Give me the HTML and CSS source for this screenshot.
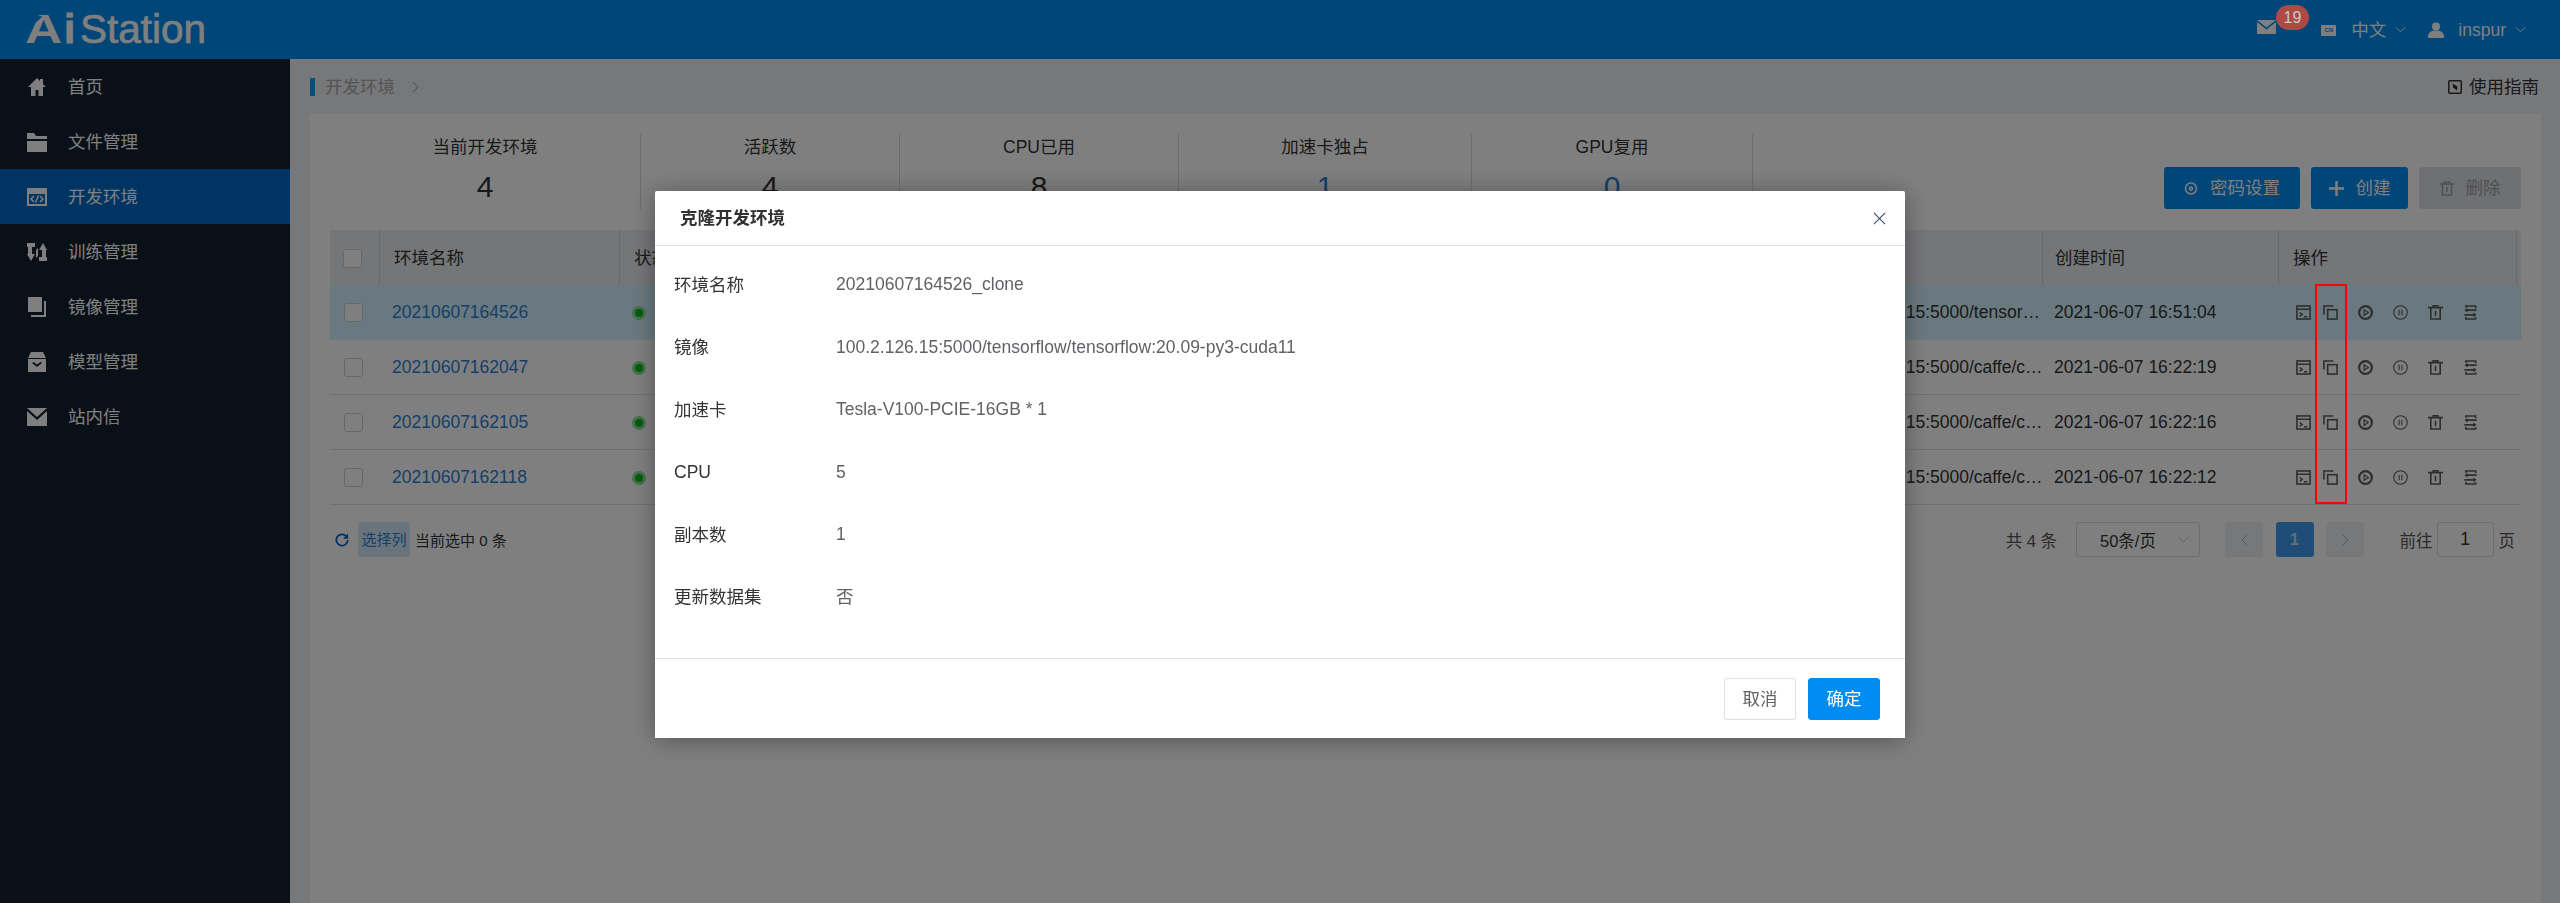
FILE: index.html
```html
<!DOCTYPE html>
<html lang="zh-CN">
<head>
<meta charset="utf-8">
<title>AiStation</title>
<link rel="stylesheet" href="styles.css">
</head>
<body>
<div class="app">
  <header class="topbar">
    <div class="logo"><span class="logo-a">A<svg class="logo-notch" viewBox="0 0 12 10"><path d="M0 1l12 2-6 7z"/></svg></span><span class="logo-i">i</span><span class="logo-rest">Station</span></div>
    <div class="top-right">
      <span class="mail">
        <svg class="ic-mail" viewBox="0 0 19 14"><path d="M0 0h19L9.500 7.500z"/><path d="M0 2l9.500 7.500L19 2v12H0z"/></svg>
      </span>
      <span class="lang-ic">CN</span>
      <span class="top-text lang-text">中文</span>
      <svg class="chev" viewBox="0 0 12 7"><path d="M1 1l5 5 5-5"/></svg>
      <svg class="ic-user" viewBox="0 0 16 16"><circle cx="8" cy="4.500" r="4"/><path d="M0 15c0-4 3-6 5.500-6.500h5C13 9 16 11 16 15c0 .6-.4 1-1 1H1c-.6 0-1-.4-1-1z"/></svg>
      <span class="top-text user-text">inspur</span>
      <svg class="chev" viewBox="0 0 12 7"><path d="M1 1l5 5 5-5"/></svg>
    </div>
  </header>
  <div class="body">
    <nav class="sidebar">
      <a class="nav-item"><svg class="nav-ic" viewBox="0 0 20 20"><path d="M10 1L1 10h3v9h4.500v-6h3v6H16v-9h3l-3-3V2h-3v2z"/></svg><span class="cjk">首页</span></a>
      <a class="nav-item"><svg class="nav-ic" viewBox="0 0 20 20"><path d="M0 1h7l2 3h11v3H0zM0 9h20v11H0z"/></svg><span class="cjk">文件管理</span></a>
      <a class="nav-item active"><svg class="nav-ic" viewBox="0 0 20 20"><path fill-rule="evenodd" d="M0 1h20v18H0zM2 7v10h16V7z"/><path class="nav-stroke" d="M7 9l-3 3 3 3M13 9l3 3-3 3M11.500 8.500l-3 7"/></svg><span class="cjk">开发环境</span></a>
      <a class="nav-item"><svg class="nav-ic" viewBox="0 0 20 20"><path d="M0 1h8v4H5v7h3l-4 7-4-7h1V5H0z"/><path d="M20 19h-8v-4h3V8h-3l4-7 4 7h-1v7h1z"/><path d="M9 8l2-2v8l-2 2z"/></svg><span class="cjk">训练管理</span></a>
      <a class="nav-item"><svg class="nav-ic" viewBox="0 0 20 20"><path d="M1 0h14v15H1z"/><path d="M17 4h2v16H4v-2h13z"/></svg><span class="cjk">镜像管理</span></a>
      <a class="nav-item"><svg class="nav-ic" viewBox="0 0 20 20"><path d="M4 0h12l3 6H1z"/><path fill-rule="evenodd" d="M1 7h18v13H1zM5 11l5 4 5-4-1.500-1L10 12.500 6.500 10z"/></svg><span class="cjk">模型管理</span></a>
      <a class="nav-item"><svg class="nav-ic" viewBox="0 0 20 20"><path d="M0 1h20L10 10z"/><path d="M0 4l10 9 10-9v15H0z"/></svg><span class="cjk">站内信</span></a>
    </nav>
    <main class="main">
      <div class="crumbs">
        <span class="crumb-bar"></span>
        <span class="crumb-text cjk">开发环境</span>
        <svg class="crumb-chev" viewBox="0 0 7 12"><path d="M1 1l5 5-5 5"/></svg>
        <span class="guide">
          <svg class="guide-ic" viewBox="0 0 14 14"><rect x=".75" y=".75" width="12.500" height="12.500" rx="1"/><path class="guide-fill" d="M4.500 3.500l5 3-.5 4-4-3z"/></svg>
          <span class="cjk">使用指南</span>
        </span>
      </div>
      <section class="panel">
        <div class="top-row">
          <div class="stats">
            <div class="stat"><div class="stat-label">当前开发环境</div><div class="stat-num">4</div></div>
            <div class="stat"><div class="stat-label">活跃数</div><div class="stat-num">4</div></div>
            <div class="stat"><div class="stat-label">CPU已用</div><div class="stat-num">8</div></div>
            <div class="stat"><div class="stat-label">加速卡独占</div><div class="stat-num blue">1</div></div>
            <div class="stat"><div class="stat-label">GPU复用</div><div class="stat-num blue">0</div></div>
          </div>
          <div class="actions">
            <button class="btn btn-key"><svg class="btn-ic" viewBox="0 0 14 14"><circle cx="7" cy="7" r="5.500"/><circle cx="7" cy="7" r="1.500"/></svg><span class="cjk">密码设置</span></button>
            <button class="btn btn-new"><svg class="btn-ic-plus" viewBox="0 0 15 15"><path d="M7.500 0v15M0 7.500h15"/></svg><span class="cjk">创建</span></button>
            <button class="btn btn-off"><svg class="btn-ic" viewBox="0 0 14 15"><path d="M0 3h14M4.500 3V1h5v2M2.500 3v11h9V3M7 6v5"/></svg><span class="cjk">删除</span></button>
          </div>
        </div>
        <table class="grid">
          <colgroup>
            <col class="c-check"><col class="c-name"><col class="c-status"><col class="c-image"><col class="c-time"><col class="c-ops"><col class="c-end">
          </colgroup>
          <thead>
            <tr>
              <th><span class="check"></span></th>
              <th>环境名称</th>
              <th>状态</th>
              <th>镜像</th>
              <th class="th-time">创建时间</th>
              <th>操作</th>
              <th class="th-end"></th>
            </tr>
          </thead>
          <tbody>
            <tr class="selected">
              <td><span class="check"></span></td>
              <td><a class="link">20210607164526</a></td>
              <td><span class="dot"></span></td>
              <td class="ellipsis">100.2.126.15:5000/tensorflow/tensorflow:20.09-py3-cuda11</td>
              <td class="td-time">2021-06-07 16:51:04</td>
              <td colspan="2"><div class="ops">
                <svg class="op op-tight" viewBox="0 0 16 16"><rect x="1" y="1" width="14" height="14"/><path d="M1 4.500h14M4 8l2.500 2L4 12M8.500 12.500h3.500"/></svg>
                <svg class="op" viewBox="0 0 16 16"><path d="M1 10V1h10"/><rect x="5" y="5" width="10" height="10"/></svg>
                <svg class="op" viewBox="0 0 16 16"><circle class="thick" cx="8" cy="8" r="6.800"/><path class="tri" d="M6.500 5L11 8l-4.500 3z"/></svg>
                <svg class="op thin" viewBox="0 0 16 16"><circle cx="8" cy="8" r="7.200"/><path d="M6.500 5v6M9.500 5v6"/></svg>
                <svg class="op" viewBox="0 0 16 16"><path d="M0 2.800h16M5.500 2.800V.8h5v2M3 2.800V15h10V2.800M8 6v6"/></svg>
                <svg class="op" viewBox="0 0 16 16"><path d="M3 3V1h10.500v2.500M14.500 5.500H4M3 12.500V15h10.500v-2M1.500 10.500H12"/><path class="solid" d="M5 3L1.500 5.500 5 8zM11 8l3.500 2.500L11 13z"/></svg>
              </div></td>
            </tr>
            <tr>
              <td><span class="check"></span></td>
              <td><a class="link">20210607162047</a></td>
              <td><span class="dot"></span></td>
              <td class="ellipsis">100.2.126.15:5000/caffe/caffe:1.0-py2</td>
              <td class="td-time">2021-06-07 16:22:19</td>
              <td colspan="2"><div class="ops">
                <svg class="op op-tight" viewBox="0 0 16 16"><rect x="1" y="1" width="14" height="14"/><path d="M1 4.500h14M4 8l2.500 2L4 12M8.500 12.500h3.500"/></svg>
                <svg class="op" viewBox="0 0 16 16"><path d="M1 10V1h10"/><rect x="5" y="5" width="10" height="10"/></svg>
                <svg class="op" viewBox="0 0 16 16"><circle class="thick" cx="8" cy="8" r="6.800"/><path class="tri" d="M6.500 5L11 8l-4.500 3z"/></svg>
                <svg class="op thin" viewBox="0 0 16 16"><circle cx="8" cy="8" r="7.200"/><path d="M6.500 5v6M9.500 5v6"/></svg>
                <svg class="op" viewBox="0 0 16 16"><path d="M0 2.800h16M5.500 2.800V.8h5v2M3 2.800V15h10V2.800M8 6v6"/></svg>
                <svg class="op" viewBox="0 0 16 16"><path d="M3 3V1h10.500v2.500M14.500 5.500H4M3 12.500V15h10.500v-2M1.500 10.500H12"/><path class="solid" d="M5 3L1.500 5.500 5 8zM11 8l3.500 2.500L11 13z"/></svg>
              </div></td>
            </tr>
            <tr>
              <td><span class="check"></span></td>
              <td><a class="link">20210607162105</a></td>
              <td><span class="dot"></span></td>
              <td class="ellipsis">100.2.126.15:5000/caffe/caffe:1.0-py2</td>
              <td class="td-time">2021-06-07 16:22:16</td>
              <td colspan="2"><div class="ops">
                <svg class="op op-tight" viewBox="0 0 16 16"><rect x="1" y="1" width="14" height="14"/><path d="M1 4.500h14M4 8l2.500 2L4 12M8.500 12.500h3.500"/></svg>
                <svg class="op" viewBox="0 0 16 16"><path d="M1 10V1h10"/><rect x="5" y="5" width="10" height="10"/></svg>
                <svg class="op" viewBox="0 0 16 16"><circle class="thick" cx="8" cy="8" r="6.800"/><path class="tri" d="M6.500 5L11 8l-4.500 3z"/></svg>
                <svg class="op thin" viewBox="0 0 16 16"><circle cx="8" cy="8" r="7.200"/><path d="M6.500 5v6M9.500 5v6"/></svg>
                <svg class="op" viewBox="0 0 16 16"><path d="M0 2.800h16M5.500 2.800V.8h5v2M3 2.800V15h10V2.800M8 6v6"/></svg>
                <svg class="op" viewBox="0 0 16 16"><path d="M3 3V1h10.500v2.500M14.500 5.500H4M3 12.500V15h10.500v-2M1.500 10.500H12"/><path class="solid" d="M5 3L1.500 5.500 5 8zM11 8l3.500 2.500L11 13z"/></svg>
              </div></td>
            </tr>
            <tr>
              <td><span class="check"></span></td>
              <td><a class="link">20210607162118</a></td>
              <td><span class="dot"></span></td>
              <td class="ellipsis">100.2.126.15:5000/caffe/caffe:1.0-py2</td>
              <td class="td-time">2021-06-07 16:22:12</td>
              <td colspan="2"><div class="ops">
                <svg class="op op-tight" viewBox="0 0 16 16"><rect x="1" y="1" width="14" height="14"/><path d="M1 4.500h14M4 8l2.500 2L4 12M8.500 12.500h3.500"/></svg>
                <svg class="op" viewBox="0 0 16 16"><path d="M1 10V1h10"/><rect x="5" y="5" width="10" height="10"/></svg>
                <svg class="op" viewBox="0 0 16 16"><circle class="thick" cx="8" cy="8" r="6.800"/><path class="tri" d="M6.500 5L11 8l-4.500 3z"/></svg>
                <svg class="op thin" viewBox="0 0 16 16"><circle cx="8" cy="8" r="7.200"/><path d="M6.500 5v6M9.500 5v6"/></svg>
                <svg class="op" viewBox="0 0 16 16"><path d="M0 2.800h16M5.500 2.800V.8h5v2M3 2.800V15h10V2.800M8 6v6"/></svg>
                <svg class="op" viewBox="0 0 16 16"><path d="M3 3V1h10.500v2.500M14.500 5.500H4M3 12.500V15h10.500v-2M1.500 10.500H12"/><path class="solid" d="M5 3L1.500 5.500 5 8zM11 8l3.500 2.500L11 13z"/></svg>
              </div></td>
            </tr>
          </tbody>
        </table>
        <div class="foot">
          <svg class="refresh" viewBox="0 0 16 16"><path d="M13.500 4.500A6.500 6.500 0 1 0 14.500 8"/><path class="refresh-tip" d="M15 0.500v6h-6z"/></svg>
          <span class="pick">选择列</span>
          <span class="selected-count">当前选中 0 条</span>
          <div class="pager">
            <span class="total">共 4 条</span>
            <span class="size">50条/页<svg class="size-chev" viewBox="0 0 12 7"><path d="M1 1l5 5 5-5"/></svg></span>
            <span class="pg"><svg class="pg-ic" viewBox="0 0 7 12"><path d="M6 1L1 6l5 5"/></svg></span>
            <span class="pg pg-on">1</span>
            <span class="pg"><svg class="pg-ic" viewBox="0 0 7 12"><path d="M1 1l5 5-5 5"/></svg></span>
            <span class="goto">前往</span>
            <span class="goto-box">1</span>
            <span class="goto-end">页</span>
          </div>
        </div>
      </section>
    </main>
  </div>
</div>

<div class="mask">
  <div class="dialog">
    <div class="dialog-head">
      <span class="dialog-title cjk">克隆开发环境</span>
      <svg class="dialog-x" viewBox="0 0 14 14"><path d="M1 1l12 12M13 1L1 13"/></svg>
    </div>
    <div class="dialog-body">
      <div class="row"><span class="row-label cjk">环境名称</span><span class="row-val">20210607164526_clone</span></div>
      <div class="row"><span class="row-label cjk">镜像</span><span class="row-val">100.2.126.15:5000/tensorflow/tensorflow:20.09-py3-cuda11</span></div>
      <div class="row"><span class="row-label cjk">加速卡</span><span class="row-val">Tesla-V100-PCIE-16GB * 1</span></div>
      <div class="row"><span class="row-label">CPU</span><span class="row-val">5</span></div>
      <div class="row"><span class="row-label cjk">副本数</span><span class="row-val">1</span></div>
      <div class="row"><span class="row-label cjk">更新数据集</span><span class="row-val cjk">否</span></div>
    </div>
    <div class="dialog-foot">
      <button class="d-btn d-cancel"><span class="cjk">取消</span></button>
      <button class="d-btn d-ok"><span class="cjk">确定</span></button>
    </div>
  </div>
</div>
<div class="badge">19</div>
<div class="annot"></div>
</body>
</html>
```

FILE: styles.css
```css
* { box-sizing: border-box; }
html, body { margin: 0; height: 100%; overflow: hidden; }
body {
  font-family: "Liberation Sans", "Noto Sans CJK SC", sans-serif;
  font-size: 17.5px;
  color: #333;
  position: relative;
}
/* CJK glyphs sit low against the Latin baseline; lift them a touch */
.cjk { display: inline-block; padding-bottom: 3px; }
.app { height: 903px; display: flex; flex-direction: column; background: #eef0f4; }

/* top bar */
.topbar {
  height: 59px; flex: none; background: #008cf0; color: #fff;
  display: flex; align-items: center; padding-left: 25px; padding-right: 34px;
}
.logo { font-size: 40.5px; line-height: 55px; color: #fff; white-space: nowrap; display: flex; height: 55px; }
.logo-a { width: 39px; font-weight: 700; display: block; transform: scaleX(1.27); transform-origin: left center; position: relative; }
.logo-notch { position: absolute; left: 3px; top: 12px; width: 12px; height: 8px; fill: #008cf0; }
.logo-i { width: 16px; font-weight: 700; -webkit-text-stroke: .8px #fff; }
.logo-rest { -webkit-text-stroke: .7px #fff; }
.top-right { margin-left: auto; display: flex; align-items: center; }
.mail { display: flex; margin-right: 45px; margin-bottom: 5px; }
.ic-mail { width: 19px; height: 14px; fill: #fff; }
.lang-ic {
  width: 15px; height: 11px; background: #fff; color: #008cf0; font-size: 6px; font-weight: 700;
  text-align: center; line-height: 11px; margin-right: 15px; margin-top: 1px; border-radius: 1px;
}
.top-text { font-size: 17.5px; line-height: 24px; color: #fff; }
.chev { width: 11px; height: 7px; margin-left: 9px; fill: none; stroke: #fff; stroke-width: 1; }
.ic-user { width: 16px; height: 16px; fill: #fff; margin-left: 22px; margin-right: 14px; }

/* shell */
.body { flex: 1; display: flex; min-height: 0; }
.sidebar { width: 290px; flex: none; background: #142030; }
.nav-item {
  display: flex; align-items: center; height: 55px; padding-left: 27px;
  color: #fff; font-size: 17.5px;
}
.nav-item.active { background: #0068c6; }
.nav-ic { width: 20px; height: 20px; fill: #fff; margin-right: 21px; flex: none; }
.nav-stroke { fill: none; stroke: #fff; stroke-width: 1.500; }

.main { flex: 1; min-width: 0; display: flex; flex-direction: column; padding: 0 19px 0 20px; }
.crumbs { height: 55px; flex: none; display: flex; align-items: center; }
.crumb-bar { width: 5px; height: 18px; background: #00a0f8; margin-right: 10px; }
.crumb-text { color: #a8a8a8; font-size: 17.5px; }
.crumb-chev { width: 7px; height: 12px; margin-left: 17px; fill: none; stroke: #999; stroke-width: 1; }
.guide { margin-left: auto; margin-right: 2px; color: #333; display: flex; align-items: center; font-size: 17.5px; }
.guide-ic { width: 14px; height: 14px; margin-right: 7px; fill: none; stroke: #333; stroke-width: 1.500; }
.guide-fill { fill: #333; stroke: none; }

.panel { flex: 1; background: #fff; padding: 20px 20px 0; min-height: 0; }
.top-row { display: flex; height: 76px; }
.stats { display: grid; grid-template-columns: 311px 259px 279px 293px 281px; }
.stat { border-right: 1px solid #d8d8d8; text-align: center; }
.stat-label { font-size: 17.5px; line-height: 26px; color: #333; }
.stat-num { font-size: 30px; line-height: 40px; margin-top: 7px; color: #333; }
.stat-num.blue { color: #2b7fd8; }
.actions { margin-left: auto; display: flex; gap: 11px; align-self: flex-end; margin-bottom: 1px; }
.btn {
  height: 42px; border: 0; border-radius: 3px; font: inherit; font-size: 17.5px; color: #fff;
  display: flex; align-items: center; justify-content: center; background: #008cf0; padding: 0;
}
.btn-key { width: 136px; }
.btn-new { width: 97px; }
.btn-off { width: 102px; background: #dfe1e7; color: #a0a0a0; }
.btn-ic { width: 14px; height: 15px; fill: none; stroke: currentColor; stroke-width: 1.500; margin-right: 12px; }
.btn-ic-plus { width: 15px; height: 15px; fill: none; stroke: #fff; stroke-width: 2.500; margin-right: 12px; }

/* table */
.grid { width: 2191px; border-collapse: separate; border-spacing: 0; table-layout: fixed; margin-top: 20px; font-size: 17.5px; }
.c-check { width: 50px; }
.c-name { width: 240px; }
.c-status { width: 1191px; }
.c-image { width: 232px; }
.c-time { width: 236px; }
.c-ops { width: 238px; }
.c-end { width: 4px; }
.grid th {
  height: 55px; background: #ebecf1; font-weight: 400; text-align: left; color: #333;
  padding: 0 14px 3px; border-right: 1px solid #d0d2d8;
}
.grid th:first-child, .grid td:first-child { padding: 0 4px 0 0; text-align: center; }
.grid .th-time { padding-left: 12px; }
.grid .th-end { padding: 0; border-right: 0; }
.grid td {
  height: 55px; padding: 0 12px; border-bottom: 1px solid #dfe1e7; color: #333; white-space: nowrap;
}
.grid td.td-time { padding-left: 11px; }
.grid tr.selected td { background: #d4f2ff; border-bottom-color: #d4f2ff; }
.grid td.ellipsis { overflow: hidden; text-overflow: ellipsis; padding-right: 0; }
.check {
  display: inline-block; width: 19px; height: 19px; background: #fff;
  border: 1px solid #cdd0d8; border-radius: 3px; vertical-align: middle;
}
.link { color: #2a7fd4; }
.dot {
  display: inline-block; width: 14px; height: 14px; border-radius: 50%;
  background: #0ab81f; border: 3px solid #8ee09a; vertical-align: middle;
}
.ops { display: flex; align-items: center; gap: 20px; padding-left: 5px; }
.op { width: 15px; height: 15px; fill: none; stroke: #5c5c5c; stroke-width: 1.700; flex: none; }
.op-tight { margin-right: -8px; }
.op .thick { stroke-width: 2.400; }
.op .tri { stroke-width: 1.300; }
.op .solid { fill: #5c5c5c; stroke: none; }
.op.thin { stroke-width: 1.100; stroke: #555; }

.foot { display: flex; align-items: center; margin-top: 17px; height: 35px; font-size: 15px; margin-left: 5px; }
.refresh { width: 14px; height: 14px; fill: none; stroke: #0068c6; stroke-width: 2; margin-right: 9px; flex: none; }
.refresh-tip { fill: #0068c6; stroke: none; }
.pick {
  height: 35px; width: 52px; line-height: 35px; text-align: center; background: #d5e8f8;
  color: #2a7fd4; border-radius: 3px; margin-right: 5px;
}
.selected-count { color: #333; }
.pager { margin-left: auto; display: flex; align-items: center; font-size: 17.5px; color: #555; }
.total { margin-right: 19px; font-size: 16.5px; }
.size {
  width: 124px; height: 35px; border: 1px solid #d8dae0; border-radius: 3px; display: flex; align-items: center;
  padding-left: 23px; color: #333; position: relative; margin-right: 25px; font-size: 16.5px;
}
.size-chev { width: 11px; height: 7px; margin-left: auto; margin-right: 10px; fill: none; stroke: #bbb; stroke-width: 1; }
.pg {
  width: 38px; height: 35px; background: #eef0f4; border-radius: 3px; margin-right: 12.5px;
  display: flex; align-items: center; justify-content: center;
}
.pg-on { background: #3f9bef; color: #c8dcec; font-weight: 700; font-size: 16px; }
.pg-ic { width: 7px; height: 12px; fill: none; stroke: #aaa; stroke-width: 1; }
.goto { margin-left: 23px; margin-right: 4px; font-size: 16.5px; }
.goto-box {
  width: 57px; height: 35px; border: 1px solid #d8dae0; border-radius: 3px; text-align: center;
  line-height: 33px; color: #333; margin-right: 5px;
}
.goto-end { font-size: 16.5px; margin-right: 6px; }

/* modal */
.mask {
  position: fixed; inset: 0; background: rgba(0, 0, 0, .5);
  display: flex; justify-content: center; align-items: flex-start; padding-top: 191px;
}
.dialog { width: 1250px; height: 547px; background: #fff; box-shadow: 0 2px 24px rgba(0, 0, 0, .35); display: flex; flex-direction: column; border-radius: 2px 2px 0 0; }
.dialog-head {
  height: 55px; flex: none; border-bottom: 1px solid #dcdfe6; display: flex; align-items: center;
  padding: 0 19px 0 25px;
}
.dialog-title { font-size: 17.5px; font-weight: 700; color: #303133; }
.dialog-x { width: 13px; height: 13px; margin-left: auto; fill: none; stroke: #3f5068; stroke-width: 1.200; }
.dialog-body { padding: 7.5px 19px 0; flex: 1; }
.row { height: 62.5px; display: flex; align-items: center; font-size: 17.5px; }
.row-label { width: 162px; color: #333; flex: none; }
.row-val { color: #606266; }
.dialog-foot {
  height: 80px; flex: none; border-top: 1px solid #dcdfe6; display: flex; justify-content: flex-end;
  align-items: center; gap: 12px; padding-right: 25px;
}
.d-btn { width: 72px; height: 42px; border-radius: 3px; font: inherit; font-size: 17.5px; padding: 0; }
.d-cancel { background: #fff; border: 1px solid #dcdfe6; color: #606266; }
.d-ok { background: #008cf0; border: 1px solid #008cf0; color: #fff; }

/* over-mask details */
.badge {
  position: absolute; left: 2276px; top: 5px; width: 33px; height: 25px; border-radius: 13px;
  background: #ad4a45; color: #c9c9c9; font-size: 16px; line-height: 25px; text-align: center;
}
.annot { position: absolute; left: 2315px; top: 284px; width: 32px; height: 220px; border: 2.5px solid #f00; }
```
